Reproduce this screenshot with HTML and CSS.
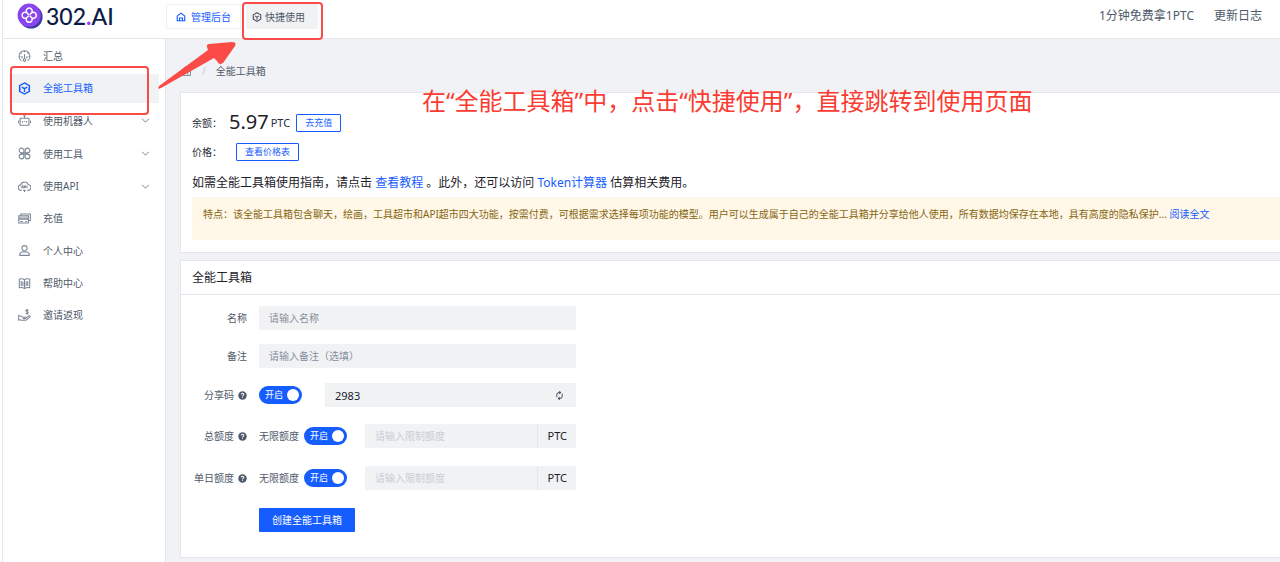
FILE: index.html
```html
<!DOCTYPE html>
<html lang="zh-CN">
<head>
<meta charset="utf-8">
<meta name="viewport" content="width=device-width, initial-scale=1">
<title>302.AI 全能工具箱</title>
<link rel="stylesheet" href="styles.css">
</head>
<body>
<svg class="defs" aria-hidden="true">
  <symbol id="cube" viewBox="0 0 16 16"><path d="M8 1.2 14 4.6v6.8L8 14.8 2 11.4V4.6zM4.6 6.2 8 8.2l3.4-2M8 8.2v4M5 2.8v1M11 2.8v1M2 9h1.4M14 9h-1.4"/></symbol>
  <symbol id="home" viewBox="0 0 16 16"><path d="M2 6.6 8 1.8l6 4.8V14H2zM5.6 14V9.6h4.8V14"/></symbol>
  <symbol id="chevron" viewBox="0 0 16 16"><path d="m2 5 6 6 6-6"/></symbol>
  <symbol id="help" viewBox="0 0 16 16"><circle cx="8" cy="8" r="7.5" fill="currentColor" stroke="none"/><path d="M5.8 6.4c0-3 4.6-2.9 4.6-.2C10.4 8 8 7.8 8 9.6M8 11v1.6" fill="none" stroke="#fff" stroke-width="1.8"/></symbol>
</svg>

<div class="app">
  <header class="header">
    <a class="logo" href="#">
      <svg class="logo-mark" viewBox="0 0 26 26" aria-hidden="true">
        <circle cx="14" cy="14" r="11.6" fill="#3b3aa5"/>
        <circle cx="12.2" cy="12.2" r="11.6" fill="#8b45ee"/>
        <path d="M9.6 9.6a3 3 0 1 1 5.2 0 3 3 0 1 1 0 5.2 3 3 0 1 1-5.2 0 3 3 0 1 1 0-5.2zM9.6 9.6l1.7 1.7M14.8 9.6l-1.7 1.7M9.6 14.8l1.7-1.7M14.8 14.8l-1.7-1.7" fill="none" stroke="#fff" stroke-width="1.5" stroke-linecap="round"/>
      </svg>
      <span>302<b>.</b>AI</span>
    </a>
    <nav class="tabs">
      <a class="tab tab-current" href="#"><svg class="icon"><use href="#home"/></svg>管理后台</a>
      <a class="tab tab-quick marked" href="#"><svg class="icon"><use href="#cube"/></svg>快捷使用</a>
    </nav>
    <nav class="links">
      <a href="#">1分钟免费拿1PTC</a>
      <a href="#">更新日志</a>
    </nav>
  </header>

  <div class="body">
    <aside class="sidebar">
      <ul class="menu">
        <li><a href="#"><svg class="icon" viewBox="0 0 16 16"><path d="M4.2 13.4a6.8 6.8 0 1 1 7.6 0M8 14a1.6 1.6 0 1 0 0-3.2A1.6 1.6 0 0 0 8 14zM8 10.8V5M8 1.2v1.6M1.4 7.8H3M13 7.8h1.6M3.4 3.4l1 1M12.6 3.4l-1 1M5 7.5v3M11 7.5v3"/></svg><span>汇总</span></a></li>
        <li><a class="active marked" href="#"><svg class="icon"><use href="#cube"/></svg><span>全能工具箱</span></a></li>
        <li class="group"><a href="#"><svg class="icon" viewBox="0 0 16 16"><path d="M2.6 5.2h10.8v8.6H2.6zM8 5V2.6M6.4 2.2h3.2M.7 8v3.4M15.3 8v3.4M5.6 8.6v1.8M10.4 8.6v1.8M8 8.8v1"/></svg><span>使用机器人</span><svg class="chevron"><use href="#chevron"/></svg></a></li>
        <li class="group"><a href="#"><svg class="icon" viewBox="0 0 16 16"><path d="M7.2 7.2H4.3a2.9 2.9 0 1 1 2.9-2.9zM8.8 7.2V4.3a2.9 2.9 0 1 1 2.9 2.9zM7.2 8.8v2.9a2.9 2.9 0 1 1-2.9-2.9zM8.8 8.8h2.9a2.9 2.9 0 1 1-2.9 2.9z"/></svg><span>使用工具</span><svg class="chevron"><use href="#chevron"/></svg></a></li>
        <li><a href="#"><svg class="icon" viewBox="0 0 16 16"><path d="M4.6 12.8H4A3.4 3.4 0 0 1 3.4 6a4.8 4.8 0 0 1 9.2-.2 3.5 3.5 0 0 1-.2 7h-1M6.4 12.8h3.2M8 12.8v2M4.2 10l1.2-3 1.2 3M7.6 10V7.4h1.6v1.4H7.6M11 7.2V10"/></svg><span>使用API</span><svg class="chevron"><use href="#chevron"/></svg></a></li>
        <li><a href="#"><svg class="icon" viewBox="0 0 16 16"><path d="M3.4 4.6V2.4h11.8v8.4H13M1 4.8h11.8v8.8H1zM1 7.4h11.8M1 9h11.8M3 11.6h3M9 11.6h2"/></svg><span>充值</span></a></li>
        <li class="group"><a href="#"><svg class="icon" viewBox="0 0 16 16"><path d="M8 8.4a3.2 3.2 0 1 0 0-6.4 3.2 3.2 0 0 0 0 6.4zM4.6 9.8h6.8l2.4 2v2.2H2.2v-2.2z"/></svg><span>个人中心</span></a></li>
        <li><a href="#"><svg class="icon" viewBox="0 0 16 16"><path d="M1.6 2.6c2.4-.6 4.6-.4 6.4.8 1.8-1.2 4-1.4 6.4-.8v10.6c-2.4-.5-4.6-.2-6.4 1-1.8-1.2-4-1.5-6.4-1zM8 3.4v10.8M4 5v6M6 5.4v6M10 5.4v6M12 5v6"/></svg><span>帮助中心</span></a></li>
        <li><a href="#"><svg class="icon" viewBox="0 0 16 16"><path d="M.8 7v7.6M.8 8.6h2.6l3 1.6h2.8c1.2 1.4-.4 1.8-3.4 1.6M9.4 11.2l4.4-3c1.6.2 1.2 1.2.4 2l-4.4 3.6H4L.8 13M12.8 1.4H10c-1.4 2 3.2 1.6 2.6 3.4-.4 1-2.4.8-3.2.4M11.2 0v7"/></svg><span>邀请返现</span></a></li>
      </ul>
    </aside>

    <main class="main">
      <nav class="crumbs">
        <a href="#" aria-label="首页"><svg class="icon"><use href="#home"/></svg></a>
        <span class="slash">/</span>
        <span>全能工具箱</span>
      </nav>

      <section class="card intro">
        <div class="line balance"><span class="key">余额：</span><strong>5.97</strong><span class="unit">PTC</span><button class="ghost" type="button">去充值</button></div>
        <div class="line price"><span class="key">价格：</span><button class="ghost" type="button">查看价格表</button></div>
        <p class="guide">如需全能工具箱使用指南，请点击 <a href="#">查看教程</a> 。此外，还可以访问 <a href="#">Token计算器</a> 估算相关费用。</p>
        <p class="notice">特点：该全能工具箱包含聊天，绘画，工具超市和API超市四大功能，按需付费，可根据需求选择每项功能的模型。用户可以生成属于自己的全能工具箱并分享给他人使用，所有数据均保存在本地，具有高度的隐私保护... <a href="#">阅读全文</a></p>
      </section>

      <section class="card">
        <h2>全能工具箱</h2>
        <form class="form">
          <div class="row">
            <label class="label" for="name">名称</label>
            <div class="control"><input class="field" id="name" type="text" placeholder="请输入名称"></div>
          </div>
          <div class="row">
            <label class="label" for="note">备注</label>
            <div class="control"><input class="field" id="note" type="text" placeholder="请输入备注（选填）"></div>
          </div>
          <div class="row">
            <label class="label" for="code">分享码<svg class="help"><use href="#help"/></svg></label>
            <div class="control share">
              <label class="switch"><span>开启</span><input type="checkbox" role="switch" checked></label>
              <div class="group-field">
                <input class="field code" id="code" type="text" value="2983">
                <button class="refresh" type="button" aria-label="刷新"><svg class="icon" viewBox="0 0 16 16"><path d="M9.6 2.8H7A5 5 0 0 0 3 7.6a5 5 0 0 0 1 3.4M6.4 13.2H9a5 5 0 0 0 4-4.8 5 5 0 0 0-1-3.4M7.6.4 10 2.8 7.6 5.2M8.4 10.8 6 13.2l2.4 2.4"/></svg></button>
              </div>
            </div>
          </div>
          <div class="row tall">
            <label class="label" for="total">总额度<svg class="help"><use href="#help"/></svg></label>
            <div class="control limit">
              <label class="unlimited">无限额度<span class="switch"><span>开启</span><input type="checkbox" role="switch" checked></span></label>
              <div class="group-field"><input class="field" id="total" type="text" placeholder="请输入限制额度" disabled><span class="suffix">PTC</span></div>
            </div>
          </div>
          <div class="row tall">
            <label class="label" for="daily">单日额度<svg class="help"><use href="#help"/></svg></label>
            <div class="control limit">
              <label class="unlimited">无限额度<span class="switch"><span>开启</span><input type="checkbox" role="switch" checked></span></label>
              <div class="group-field"><input class="field" id="daily" type="text" placeholder="请输入限制额度" disabled><span class="suffix">PTC</span></div>
            </div>
          </div>
          <div class="row tall">
            <span class="label"></span>
            <button class="primary" type="button">创建全能工具箱</button>
          </div>
        </form>
      </section>
    </main>
  </div>

  <svg class="arrow" viewBox="0 0 80 50" aria-hidden="true"><path d="M2 44 51 8 50 5Q49 3 52 2L75 0Q80 0 78 4L66 21Q62 24 60 19L57 16 4 46Q0 48 2 44z" fill="#fa4b46"/></svg>
  <p class="caption">在“全能工具箱”中，点击“快捷使用”，直接跳转到使用页面</p>
</div>
</body>
</html>
```
FILE: styles.css
```css
* {
  box-sizing: border-box;
}

body {
  margin: 0;
  background: #fff;
  color: #4e5969;
  font: 10px/16px "Noto Sans", "Noto Sans CJK SC", sans-serif;
}

a {
  color: inherit;
  text-decoration: none;
}

button,
input {
  margin: 0;
  border: 0;
  font: inherit;
}

p,
h2,
ul {
  margin: 0;
  padding: 0;
}

.defs {
  position: absolute;
  width: 0;
  height: 0;
}

.icon,
.chevron {
  flex: none;
  fill: none;
  stroke: currentColor;
  stroke-width: 1.3;
}

.app {
  position: relative;
  display: flex;
  flex-direction: column;
  min-height: 100vh;
  margin-left: 2px;
  border-left: 1px solid #e5e6eb;
  overflow: hidden;
}

/* Header */
.header {
  display: flex;
  align-items: flex-start;
  min-height: 39px;
  border-bottom: 1px solid #e5e6eb;
}

.logo {
  display: flex;
  align-items: center;
  gap: 3px;
  width: 163px;
  padding: 2px 0 0 14px;
  color: #0b1b45;
  font: 500 23px/28px Lato, sans-serif;
}

.logo b {
  color: #9a3df5;
}

.logo-mark {
  width: 26px;
  height: 26px;
}

.tabs {
  display: flex;
  gap: 5px;
  padding-top: 4px;
}

.tab {
  display: flex;
  align-items: center;
  gap: 5px;
  height: 25px;
  padding: 0 9px;
}

.tab .icon {
  width: 10px;
  height: 10px;
  stroke-width: 1.8;
}

.tab-current {
  border: 1px solid #f0f1f4;
  color: #165dff;
}

.tab-quick {
  gap: 3px;
  padding: 0 13px 0 6px;
  background: #f1f2f4;
}

.links {
  display: flex;
  gap: 20px;
  margin-left: auto;
  padding: 8px 18px 0 0;
  font-size: 12px;
}

/* Sidebar */
.body {
  display: flex;
  flex: 1;
}

.sidebar {
  flex: none;
  width: 163px;
  padding: 1px 6px 0;
  border-right: 1px solid #e5e6eb;
}

.menu {
  list-style: none;
}

.menu li {
  display: flex;
  align-items: center;
  height: 32px;
}

.menu .group {
  height: 33px;
}

.menu a {
  display: flex;
  flex: 1;
  align-items: center;
  gap: 12px;
  height: 29px;
  padding: 0 9px;
}

.menu .icon {
  width: 13px;
  height: 13px;
  color: #7d8796;
}

.menu .active {
  background: #f1f2f4;
  color: #165dff;
}

.menu .active .icon {
  color: inherit;
  stroke-width: 1.8;
}

.menu .chevron {
  width: 9px;
  height: 9px;
  margin-left: auto;
}

/* Main column */
.main {
  display: flex;
  flex: 1;
  flex-direction: column;
  gap: 7px;
  min-width: 0;
  padding: 24px 0 3px 14px;
  background: #f1f2f5;
}

.crumbs {
  display: flex;
  align-items: center;
  gap: 10px;
  height: 16px;
  margin-bottom: 6px;
}

.crumbs .icon {
  display: block;
  width: 12px;
  height: 12px;
  color: #86909c;
}

.slash {
  color: #c9cdd4;
}

.card {
  border: 1px solid #e5e6eb;
  border-right: 0;
  background: #fff;
}

.intro {
  padding: 15px 0 12px 11px;
}

.line {
  display: flex;
  align-items: center;
}

.balance {
  height: 28px;
  gap: 2px;
}

.price {
  height: 32px;
}

.key {
  width: 44px;
  color: #272e3b;
}

.balance .key {
  width: 35px;
  padding-top: 2px;
}

.balance strong {
  color: #1d2129;
  font-size: 20px;
  font-weight: normal;
}

.unit {
  margin-right: 4px;
  padding-top: 2px;
  color: #272e3b;
  font-size: 11px;
}

.ghost {
  height: 18px;
  padding: 0 8px;
  border: 1px solid #165dff;
  border-radius: 1px;
  background: #fff;
  color: #165dff;
  font-size: 9px;
  line-height: 16px;
}

.balance .ghost {
  margin-top: 2px;
}

.guide {
  padding: 4px 0;
  color: #1d2129;
  font-size: 12px;
  line-height: 21px;
}

.guide a,
.notice a {
  color: #165dff;
}

.notice {
  min-height: 43px;
  padding: 9px 11px;
  background: #fff7e8;
  color: #86650e;
}

.card h2 {
  padding: 9px 11px 8px;
  border-bottom: 1px solid #e5e6eb;
  color: #1d2129;
  font-size: 12px;
  font-weight: normal;
}

/* Form */
.form {
  display: flex;
  flex-direction: column;
  max-width: 395px;
  padding: 4px 0 16px;
}

.row {
  display: flex;
  align-items: center;
  gap: 12px;
  height: 38px;
}

.row.tall {
  height: 42px;
}

.row:nth-child(3) {
  height: 40px;
}

.label {
  display: flex;
  flex: none;
  align-items: center;
  justify-content: flex-end;
  gap: 4px;
  width: 66px;
}

.help {
  width: 9px;
  height: 9px;
}

.control {
  display: flex;
  flex: 1;
  align-items: center;
}

.field {
  flex: 1;
  width: 100%;
  min-width: 0;
  height: 24px;
  padding: 0 10px;
  border-radius: 1px;
  background: #f1f2f4;
  color: #1d2129;
}

.field::placeholder {
  color: #86909c;
}

.field:disabled::placeholder {
  color: #c9cdd4;
}

.code,
.suffix {
  font-size: 11px;
}

.group-field {
  display: flex;
  flex: 1;
  min-width: 0;
  background: #f1f2f4;
}

.refresh {
  padding: 0 12px;
  background: none;
  color: #4e5969;
}

.refresh .icon {
  display: block;
  width: 9px;
  height: 9px;
  stroke-width: 1.8;
}

.suffix {
  padding: 0 9px;
  border-left: 1px solid #e5e6eb;
  color: #1d2129;
  line-height: 24px;
}

.share {
  gap: 23px;
}

.limit {
  gap: 18px;
}

.unlimited {
  display: flex;
  align-items: center;
  gap: 5px;
}

.switch {
  display: flex;
  align-items: center;
  justify-content: space-between;
  width: 43px;
  height: 18px;
  padding: 0 3px 0 6px;
  border-radius: 9px;
  background: #165dff;
  color: #fff;
  font-size: 9px;
}

.switch input {
  width: 12px;
  height: 12px;
  border-radius: 50%;
  background: #fff;
  appearance: none;
}

.primary {
  height: 24px;
  padding: 0 13px;
  border-radius: 1px;
  background: #165dff;
  color: #fff;
}

/* Annotations over the interface */
.marked {
  position: relative;
}

.marked::after {
  position: absolute;
  border: 2px solid #fa4b46;
  border-radius: 4px;
  content: "";
}

.tab-quick.marked::after {
  inset: -2px -5px -11px -4px;
}

.active.marked::after {
  inset: -8px 10px -12px 1px;
  z-index: 1;
}

.arrow {
  position: absolute;
  top: 42px;
  left: 154px;
  width: 80px;
  height: 50px;
}

.caption {
  position: absolute;
  top: 84px;
  left: 419px;
  color: #fa3c32;
  font-size: 24px;
  line-height: 34px;
  white-space: nowrap;
}
```
